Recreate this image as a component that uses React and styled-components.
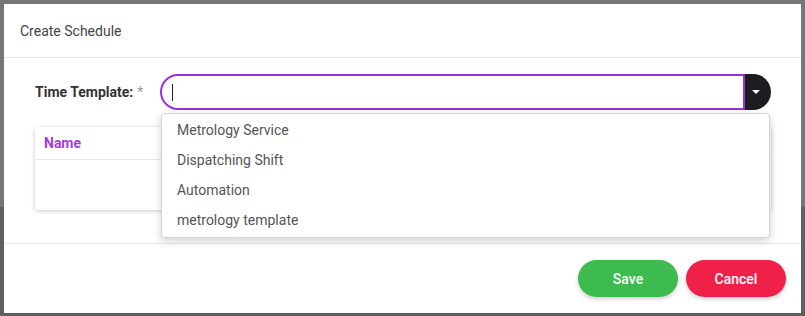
import React from 'react';
import styled, { createGlobalStyle } from 'styled-components';

const purple = '#9a30d8';

const GlobalStyle = createGlobalStyle`
  html, body {
    margin: 0;
    padding: 0;
  }
  body {
    background: linear-gradient(to bottom, #767676 0, #767676 207px, #5f5f5f 207px);
    font-family: Roboto, "Liberation Sans", sans-serif;
    overflow: hidden;
  }
`

const Modal = styled.div`
  margin: 4px 4px 3px 4px;
  width: 797px;
  height: 309px;
  background: #fff;
  display: flex;
  flex-direction: column;
  box-sizing: border-box;
`

const Header = styled.div`
  height: 53px;
  display: flex;
  align-items: center;
  padding: 0 16px;
  border-bottom: 1px solid #e6e6e6;
  font-size: 14px;
  color: #444;
`

const Body = styled.div`
  padding: 16px 30px 0 31px;
  height: 186px;
  box-sizing: border-box;
  border-bottom: 1px solid #e6e6e6;
  display: flex;
  flex-direction: column;
  gap: 17px;
`

const FormRow = styled.div`
  display: flex;
  align-items: center;
  height: 36px;
  position: relative;
  z-index: 2;
`

const Label = styled.label`
  width: 125px;
  font-size: 14px;
  font-weight: 700;
  color: #333;
`

const Required = styled.span`
  color: #999;
  font-weight: 400;
  margin-left: 4px;
`

const Combo = styled.div`
  position: relative;
  display: flex;
  width: 611px;
  height: 36px;
`

const Input = styled.div`
  flex: 1;
  border: 2px solid ${purple};
  border-radius: 18px 0 0 18px;
  display: flex;
  align-items: center;
  padding-left: 10px;
  box-sizing: border-box;
`

const Cursor = styled.span`
  width: 1px;
  height: 17px;
  background: #222;
`

const DropButton = styled.div`
  width: 26px;
  background: #1d1c21;
  border-radius: 0 18px 18px 0;
  display: flex;
  align-items: center;
  justify-content: center;
  padding-right: 4px;
  box-sizing: border-box;
`

const Menu = styled.ul`
  position: absolute;
  top: 39px;
  left: 1px;
  width: 609px;
  margin: 0;
  padding: 1px 0 2px;
  list-style: none;
  background: #fff;
  border: 1px solid #d4d4d4;
  border-radius: 4px;
  box-shadow: 0 3px 8px rgba(0, 0, 0, 0.18);
  box-sizing: border-box;
`

const MenuItem = styled.li`
  height: 30px;
  display: flex;
  align-items: center;
  padding-left: 15px;
  font-size: 14px;
  color: #555;
`

const Card = styled.div`
  width: 736px;
  height: 83px;
  background: #fff;
  border-radius: 3px;
  box-shadow: 0 1px 4px rgba(0, 0, 0, 0.22);
`

const CardHead = styled.div`
  height: 32px;
  display: flex;
  align-items: center;
  padding-left: 9px;
  border-bottom: 1px solid #e8e8e8;
  font-size: 14px;
  font-weight: 700;
  color: #a13cdd;
`

const Footer = styled.div`
  flex: 1;
  display: flex;
  justify-content: flex-end;
  align-items: flex-start;
  gap: 8px;
  padding: 16px 15px 0 0;
`

const Button = styled.button`
  width: 100px;
  height: 37px;
  border: 0;
  border-radius: 19px;
  background: ${props => props.cancel ? '#ef2149' : '#3dbb4e'};
  color: #fff;
  font-family: Roboto, "Liberation Sans", sans-serif;
  font-size: 14px;
  font-weight: 500;
  box-shadow: 0 2px 4px rgba(0, 0, 0, 0.2);
  cursor: pointer;
`

const templates = ['Metrology Service', 'Dispatching Shift', 'Automation', 'metrology template'];

export default function App() {
  return (
    <>
      <GlobalStyle />
      <Modal>
        <Header>Create Schedule</Header>
        <Body>
          <FormRow>
            <Label>
              Time Template:<Required>*</Required>
            </Label>
            <Combo>
              <Input>
                <Cursor />
              </Input>
              <DropButton>
                <svg width="8" height="4" viewBox="0 0 8 4">
                  <path d="M0 0h8L4 4z" fill="#fff" />
                </svg>
              </DropButton>
              <Menu>
                {templates.map(t => <MenuItem key={t}>{t}</MenuItem>)}
              </Menu>
            </Combo>
          </FormRow>
          <Card>
            <CardHead>Name</CardHead>
          </Card>
        </Body>
        <Footer>
          <Button>Save</Button>
          <Button cancel>Cancel</Button>
        </Footer>
      </Modal>
    </>
  );
}
